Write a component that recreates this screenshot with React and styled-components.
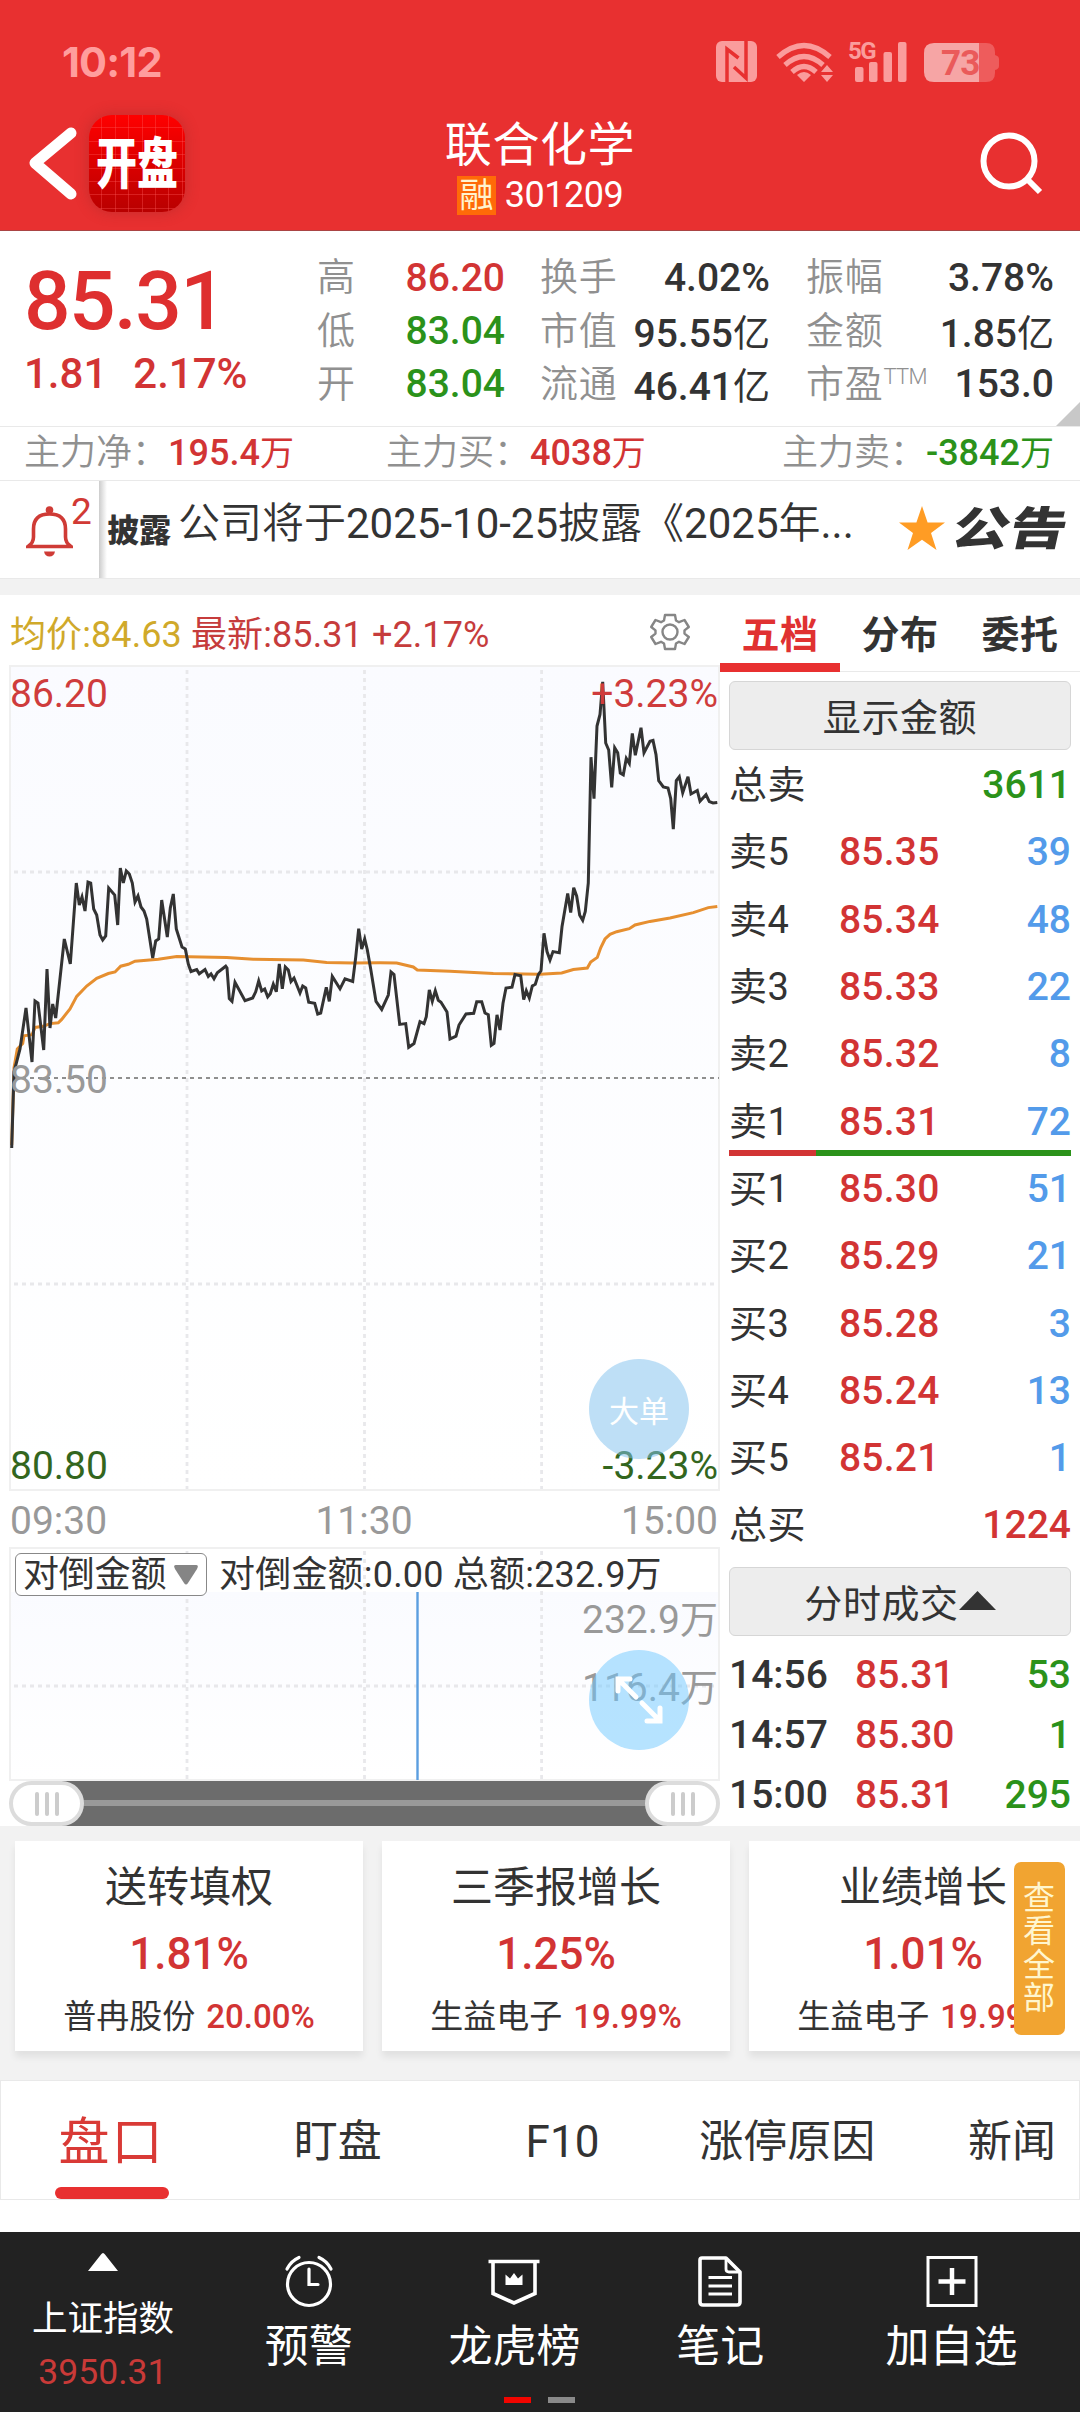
import React from 'react';
import styled, { createGlobalStyle } from 'styled-components';

const colors = {
  header: '#e83030',
  red: '#d23434',
  green: '#2b921a',
  darkGreen: '#33661e',
  blue: '#539bea',
  text: '#333333',
  grey: '#909090',
  line: '#e9e9e9',
  page: '#f2f2f2',
};

const GlobalStyle = createGlobalStyle`
  * {
    box-sizing: border-box;
  }

  body {
    margin: 0;
    background: #ffffff;
    color: ${colors.text};
    font-family: Roboto, 'Noto Sans CJK SC', sans-serif;
    font-weight: 400;
  }
`;

const stats = [
  [
    { label: '高', value: '86.20', color: colors.red },
    { label: '低', value: '83.04', color: colors.green },
    { label: '开', value: '83.04', color: colors.green },
  ],
  [
    { label: '换手', value: '4.02%' },
    { label: '市值', value: '95.55', unit: '亿' },
    { label: '流通', value: '46.41', unit: '亿' },
  ],
  [
    { label: '振幅', value: '3.78%' },
    { label: '金额', value: '1.85', unit: '亿' },
    { label: '市盈', sup: 'TTM', value: '153.0' },
  ],
];

const flows = [
  { label: '主力净：', value: '195.4', color: colors.red },
  { label: '主力买：', value: '4038', color: colors.red },
  { label: '主力卖：', value: '-3842', color: colors.green },
];

const sells = [
  { name: '卖5', price: '85.35', amount: '39' },
  { name: '卖4', price: '85.34', amount: '48' },
  { name: '卖3', price: '85.33', amount: '22' },
  { name: '卖2', price: '85.32', amount: '8' },
  { name: '卖1', price: '85.31', amount: '72' },
];

const buys = [
  { name: '买1', price: '85.30', amount: '51' },
  { name: '买2', price: '85.29', amount: '21' },
  { name: '买3', price: '85.28', amount: '3' },
  { name: '买4', price: '85.24', amount: '13' },
  { name: '买5', price: '85.21', amount: '1' },
];

const trades = [
  { time: '14:56', price: '85.31', amount: '53' },
  { time: '14:57', price: '85.30', amount: '1' },
  { time: '15:00', price: '85.31', amount: '295' },
];

const themes = [
  { title: '送转填权', change: '1.81%', stock: '普冉股份', stockChange: '20.00%' },
  { title: '三季报增长', change: '1.25%', stock: '生益电子', stockChange: '19.99%' },
  { title: '业绩增长', change: '1.01%', stock: '生益电子', stockChange: '19.99%' },
];

const priceLine = `11.7,1148 14,1072 20,1049 26,1008 32,1062 35,1001 38,1003 43.7,1050 47,969 50,1028 52.7,1004
  55.7,1018 64.3,939 70.3,964 76.3,883 79.3,905 82,897 85,911 88,882 90.7,883 93.7,909 96.7,915 100,935
  102.7,940 105.7,936 108.7,888 114.7,895 117.7,925 120.3,868 123.3,883 126.3,871 129.3,874 132.3,883
  135,902 138,896 141,907 144,911 146.7,919 152.7,958 155.7,941 158.7,939 161.7,900 167.3,937 170.3,908
  173.3,894 176.3,929 182,947 185.3,949 188.3,964 191,971.5 196.7,969.6 199.3,973.8 205,969.6 208.3,976.5
  211,973.8 214,978.8 217.3,972.7 225.7,966.2 227,968 229.3,998.7 232,1001.4 235,982.3 245,1000.6 252.7,998
  255.7,991.8 258.7,981 261.7,991 264.7,989 267.7,996.8 270.3,993.7 273.3,984.2 276.3,991.8 279.3,964
  282.3,988.8 285.3,967 288.3,970 291,981.5 294,978 300,993 302.7,986 305.7,988 308.7,1002.2 314.7,1003.3
  317.7,1014 320.7,1013 326.3,987.2 329.3,1001.4 332.3,976.5 340,988.8 345,978.8 352.7,981.5 355.7,957.4
  358.7,928.7 361.7,949 364.7,939 367.3,949.7 370.7,969 376,1001.4 381.7,1009.4 388.3,995 391,972 394,974.6
  399.7,1024.4 405.7,1023.6 408.7,1047.3 414,1043.5 420,1021.7 424,1023.6 426.3,1016.7 429.3,990
  432.3,1001.4 435.3,990.7 438.3,1000.3 441,1002.2 447,1012 450,1039 456,1036.2 459,1025 466,1014
  473.7,1013.3 476.7,1001.8 481.7,1001.8 485,1013 488.3,1014.8 491.3,1045.4 494,1043.5 497,1014.8 500,1030
  503,1003.3 506,988 512,987.2 515,974.6 520.7,975.8 523.7,999.5 526.3,990.7 529.3,998 532.3,986 535.3,984.2
  538.3,974.6 541,970.8 544,933.3 547,951.6 550,960 553,951.6 559.3,952.8 562,926.8 567.7,893.5 570.7,912.6
  573.7,887.7 576.7,896.2 579.7,915.3 582.7,920.3 585.3,911.5 588.3,882.8 591,757.2 594,798.6 597,726
  600,714.4 602.7,681.8 605.7,743 608.7,750 611.7,787.5 614.7,747.7 617.7,752.7 620.3,773 623.3,774.8
  626.3,758.4 629.3,763.4 632.3,733.5 635.3,755.3 641,727.8 644,752.7 650,741.2 653,740.4 656,754.6
  658.7,780.6 663.3,787 668,788 670.7,798.6 673.3,829.2 676.3,780.6 679.3,776.8 682.7,792.8 688,776.8
  691,794 697.3,790.5 700,801.2 706,794.7 709.3,801.6 713,803 717.3,802.4`;

const averageLine = `11.7,1145 14,1068 17.3,1049 22.7,1043.5 24,1035.8 32,1034.7 35,1027.4 43.3,1026.3 50,1023.6
  58.3,1022.8 61.7,1019.4 70,1009 76.7,996.4 86.7,986 96.7,978.4 108.3,973.5 115,972 120.7,966.2 128.3,964.3
  135,961.2 158.3,959.3 176.7,956.6 226.7,957.4 253.3,959.3 303.3,960 326.7,962.4 353.3,963 380,962.8
  396.7,963 413.3,967 417.3,970 450,971.2 493.3,973.5 540,974.2 561.7,973 573.3,969.6 587.3,968 590.7,962
  597.3,957.4 600.7,947.8 605,939 610,934.4 616.7,931.7 629.3,928.7 635,925 650,921.4 670,918 693.3,912.6
  708.3,907.6 717.3,906.5`;

const Page = styled.div`
  width: 1080px;
  height: 2412px;
  display: flex;
  flex-direction: column;
  overflow: hidden;
  background: #ffffff;
`;

const Header = styled.header`
  height: 231px;
  flex: none;
  background: ${colors.header};
  border-bottom: 1px solid #a44;
`;

const StatusBar = styled.div`
  height: 104px;
  padding: 20px 81px 0 62px;
  display: flex;
  align-items: center;
  justify-content: space-between;
`;

const Clock = styled.span`
  font-family: Inter, Roboto, sans-serif;
  font-weight: 700;
  font-size: 41.5px;
  letter-spacing: -0.8px;
  color: #ff9d9d;
`;

const TitleBar = styled.div`
  height: 126px;
  display: grid;
  grid-template-columns: 300px 1fr 300px;
`;

const HeaderLeft = styled.div`
  display: flex;
  padding: 11px 0 0 28px;
`;

const AppLogo = styled.div`
  width: 96px;
  height: 97px;
  margin-left: 12px;
  border-radius: 23px;
  display: flex;
  align-items: center;
  justify-content: center;
  background: repeating-linear-gradient(90deg, transparent 0 12.4px, rgba(255, 90, 90, 0.35) 12.4px 13.4px),
    repeating-linear-gradient(180deg, transparent 0 12.4px, rgba(255, 90, 90, 0.35) 12.4px 13.4px),
    linear-gradient(#ff0000, #b80000);
  box-shadow: 0 0 14px rgba(150, 40, 40, 0.45);

  & span {
    font-size: 41px;
    line-height: 52px;
    font-weight: 900;
    color: #ffffff;
    transform: scaleY(1.33);
  }
`;

const HeaderTitle = styled.div`
  display: flex;
  flex-direction: column;
  align-items: center;
  padding-top: 12px;
  color: #ffffff;

  & h1 {
    margin: 0;
    height: 57px;
    line-height: 58px;
    font-size: 47px;
    font-weight: 400;
    letter-spacing: 0.6px;
  }
`;

const Code = styled.div`
  display: flex;
  align-items: center;
  height: 44px;
  gap: 9px;
  font-size: 36px;
  letter-spacing: -0.5px;

  & b {
    width: 39px;
    height: 39px;
    line-height: 38px;
    font-size: 34px;
    font-weight: 400;
    text-align: center;
    background: #ff6a08;
    color: #fff3cf;
  }
`;

const HeaderRight = styled.div`
  display: flex;
  justify-content: flex-end;
  padding: 28px 37px 0 0;
`;

const Num = styled.span`
  font-family: Roboto, sans-serif;
  font-weight: 500;
  font-size: ${({ size }) => size || 39}px;
  letter-spacing: ${({ spacing }) => spacing || 0}px;
  color: ${({ color }) => color || colors.text};
`;

const Quote = styled.section`
  position: relative;
  height: 196px;
  flex: none;
  display: flex;
  border-bottom: 1px solid ${colors.line};
`;

const Price = styled.div`
  width: 317px;
  padding: 24px 0 0 24px;
  display: flex;
  flex-direction: column;
  color: ${colors.red};
`;

const PriceRow = styled.div`
  display: flex;
  gap: 26px;
  height: ${({ height }) => height}px;
  line-height: ${({ height }) => height}px;
`;

const StatColumn = styled.div`
  width: ${({ width }) => width}px;
  margin-right: ${({ gap }) => gap}px;
  padding-top: 20px;
`;

const Stat = styled.div`
  height: 53.4px;
  display: flex;
  align-items: center;
  justify-content: space-between;

  & label {
    display: flex;
    font-size: 38px;
    font-weight: 350;
    letter-spacing: 0.8px;
    line-height: 53px;
    color: ${colors.grey};
  }

  & sup {
    font-size: 22px;
    line-height: 37px;
    letter-spacing: -0.8px;
    vertical-align: top;
  }
`;

const Unit = styled.span`
  font-size: ${({ size }) => size || 37}px;
  font-weight: 400;
  color: ${({ color }) => color || colors.text};
`;

const Corner = styled.i`
  position: absolute;
  right: 0;
  bottom: 0;
  border-style: solid;
  border-width: 0 0 24px 24px;
  border-color: transparent transparent #c8c8c8 transparent;
`;

const Flows = styled.section`
  height: 54px;
  flex: none;
  padding: 0 26px 2px 24px;
  display: grid;
  grid-template-columns: 362px 1fr auto;
  align-items: center;
  border-bottom: 1px solid ${colors.line};
`;

const Flow = styled.div`
  display: flex;
  align-items: center;
  font-size: 36px;
  font-weight: 350;
  line-height: 48px;
  color: ${colors.grey};
`;

const Notice = styled.section`
  height: 98px;
  flex: none;
  display: flex;
  border-bottom: 1px solid ${colors.line};
`;

const Alarm = styled.div`
  width: 99px;
  display: flex;
  padding: 24px 0 0 26px;

  & span {
    margin: -15px 0 0 -2px;
    font-size: 37px;
    color: #d13a35;
  }
`;

const NoticeShade = styled.div`
  width: 8px;
  background: linear-gradient(90deg, #cccccc, #ffffff);
`;

const NoticeTag = styled.span`
  font-size: 32px;
  font-weight: 800;
  line-height: 101px;
  width: 71px;
`;

const NoticeText = styled.span`
  width: 703px;
  font-size: 42px;
  font-weight: 350;
  line-height: 86px;
  white-space: nowrap;

  & i {
    font-style: normal;
    font-weight: 400;
    font-size: 42px;
  }
`;

const NoticeLink = styled.div`
  display: flex;
  align-items: flex-start;
  padding: 24px 0 0 17px;

  & span {
    margin-left: 7px;
    font-size: 57px;
    line-height: 50px;
    font-weight: 900;
    transform: scaleY(0.8) skewX(-10deg);
  }
`;

const Gap = styled.div`
  height: ${({ height }) => height}px;
  flex: none;
  background: ${({ white }) => (white ? '#ffffff' : colors.page)};
`;

const Market = styled.section`
  height: 1231px;
  flex: none;
  display: flex;
`;

const ChartPanel = styled.div`
  width: 720px;
  position: relative;
`;

const ChartHead = styled.div`
  height: 71px;
  padding: 0 30px 0 10px;
  display: flex;
  align-items: center;
  font-size: 36px;
  letter-spacing: 0.1px;
  white-space: pre;

  & svg {
    margin-left: auto;
    margin-top: 2px;
  }
`;

const Label = styled.span`
  color: ${({ color }) => color};
  margin-right: 9px;
`;

const Chart = styled.svg`
  display: block;
  overflow: visible;

  & text {
    font-family: Roboto, 'Noto Sans CJK SC', sans-serif;
    font-size: 39px;
  }
`;

const TimeAxis = styled.div`
  height: 56px;
  padding: 3px 2px 0 10px;
  display: flex;
  align-items: center;
  justify-content: space-between;
  font-size: 39px;
  color: #999999;
`;

const SubChart = styled.div`
  position: relative;
  height: 234px;
`;

const SubHead = styled.div`
  position: absolute;
  top: 6px;
  left: 15px;
  display: flex;
  align-items: center;
  font-size: 36px;
  letter-spacing: 0.2px;
  line-height: 42px;
  white-space: pre;
`;

const Dropdown = styled.div`
  width: 192px;
  height: 43px;
  margin-right: 12px;
  padding: 0 8px 0 7px;
  display: flex;
  align-items: center;
  justify-content: space-between;
  border: 1.5px solid #888888;
  border-radius: 6px;
  background: #ffffff;
  letter-spacing: -0.2px;
`;

const Bubble = styled.div`
  position: absolute;
  left: 589px;
  top: ${({ top }) => top}px;
  width: 100px;
  height: 100px;
  border-radius: 50%;
  display: flex;
  align-items: center;
  justify-content: center;
  background: ${({ bg }) => bg};
  color: #ffffff;
  font-size: 30px;
`;

const Range = styled.div`
  height: 45px;
  margin-left: 9px;
  display: flex;
  align-items: center;
  justify-content: space-between;
  background: linear-gradient(#6c6c6c 0 19px, #999999 19px 25px, #6c6c6c 25px) 38px 0 / 635px 45px no-repeat;
`;

const Thumb = styled.div`
  width: 75px;
  height: 45px;
  border: 4px solid #dcdcdc;
  border-radius: 23px;
  background: #ffffff;
  display: flex;
  align-items: center;
  justify-content: center;
  gap: 6px;

  & i {
    width: 4px;
    height: 24px;
    border-radius: 2px;
    background: #cccccc;
  }
`;

const Book = styled.div`
  width: 360px;
`;

const BookTabs = styled.div`
  height: 77px;
  display: flex;
`;

const BookTab = styled.div`
  flex: 1;
  padding: 4px 0 0;
  text-align: center;
  font-size: 38px;
  font-weight: 700;
  line-height: 73px;
  letter-spacing: 0.6px;
  color: ${({ active }) => (active ? '#e03131' : colors.text)};
  box-shadow: inset 0 ${({ active }) => (active ? `-9px ${colors.header}` : `-1px ${colors.line}`)};
`;

const BookBody = styled.div`
  padding: 9px 9px 0;
`;

const BookButton = styled.button`
  width: 342px;
  height: 69px;
  padding: 0 0 2px;
  display: flex;
  align-items: center;
  justify-content: center;
  border: 1px solid #d6d6d6;
  border-radius: 6px;
  background: #ededed;
  color: ${colors.text};
  font-family: inherit;
  font-size: 38px;
  letter-spacing: 0.6px;
`;

const BookRow = styled.div`
  height: 67.3px;
  padding-top: 3px;
  display: grid;
  grid-template-columns: 110px 110px 1fr;
  align-items: center;
  font-size: 38px;
  letter-spacing: 0.5px;
  line-height: 60px;

  & > :last-child {
    text-align: right;
    grid-column: 3;
  }
`;

const Ratio = styled.div`
  height: 6px;
  margin: -4px 0 -2px;
  display: flex;
  background: ${colors.green};

  &::before {
    content: '';
    width: 87px;
    background: ${colors.red};
  }
`;

const TradeRow = styled(BookRow)`
  height: 60px;
  grid-template-columns: 126px 110px 1fr;
`;

const Themes = styled.section`
  position: relative;
  height: 254px;
  flex: none;
  padding: 15px 0 0 15px;
  display: flex;
  gap: 19px;
  background: ${colors.page};
`;

const ThemeCard = styled.div`
  width: 348px;
  height: 210px;
  flex: none;
  display: flex;
  flex-direction: column;
  align-items: center;
  background: #ffffff;
  box-shadow: 0 6px 7px rgba(0, 0, 0, 0.07);

  & h2 {
    margin: 15px 0 0;
    font-size: 42px;
    font-weight: 400;
    line-height: 64px;
  }
`;

const ThemeChange = styled(Num)`
  margin-top: 1px;
  line-height: 66px;
`;

const ThemeStock = styled.div`
  display: flex;
  align-items: center;
  margin-top: 2px;
  gap: 11px;
  font-size: 33px;
  line-height: 56px;
  white-space: nowrap;
`;

const ViewAll = styled.div`
  position: absolute;
  left: 1014px;
  top: 36px;
  width: 51px;
  height: 173px;
  padding: 20px 9px 0;
  border-radius: 7px;
  background: #f1a431;
  color: #fff6cf;
  font-size: 32px;
  line-height: 33.3px;
  word-break: break-all;
`;

const Tabs = styled.nav`
  height: 120px;
  flex: none;
  display: flex;
  border: 1px solid ${colors.line};
  overflow: hidden;
`;

const Tab = styled.div`
  position: relative;
  width: 224.8px;
  flex: none;
  text-align: center;
  font-size: ${({ active }) => (active ? 51 : 44)}px;
  letter-spacing: ${({ active }) => (active ? 2 : 0)}px;
  text-indent: ${({ active }) => (active ? -4 : -1)}px;
  line-height: 123px;
  color: ${({ active }) => (active ? '#d93a36' : colors.text)};

  &::after {
    content: '';
    display: ${({ active }) => (active ? 'block' : 'none')};
    position: absolute;
    left: 54px;
    bottom: 0;
    width: 114px;
    height: 12px;
    border-radius: 6px;
    background: ${colors.header};
  }
`;

const BottomBar = styled.footer`
  position: relative;
  height: 180px;
  flex: none;
  display: grid;
  grid-template-columns: repeat(4, 205.8px) 1fr;
  background: #222222;
  color: #ffffff;
`;

const BottomItem = styled.div`
  padding-top: 23px;
  display: flex;
  flex-direction: column;
  align-items: center;
  font-size: 44px;

  & svg {
    width: 54px;
    height: 54px;
    flex: none;
  }

  & span {
    margin-top: 8px;
    line-height: 60px;
  }
`;

const IndexItem = styled(BottomItem)`
  padding-top: 21px;
  font-size: 35.5px;

  & svg {
    width: 30px;
    height: 18px;
  }

  & span {
    margin-top: 20px;
    line-height: 56px;
  }

  & em {
    font-style: normal;
    line-height: 51px;
    color: #c93a38;
  }
`;

const Dots = styled.div`
  position: absolute;
  left: 504px;
  top: 165px;
  display: flex;
  gap: 17px;

  & i {
    width: 27px;
    height: 6px;
    background: #8a8a8a;
  }

  & i:first-child {
    background: #f20500;
  }
`;

const StatusIcons = () => (
  <svg width="284" height="48" viewBox="715 38 284 48" fill="#fa9c9c">
    <rect x="716" y="41" width="41" height="41" rx="6" />
    <path d="M727 82V49L738.5 58M746 41V78L734 67" fill="none" stroke={colors.header} strokeWidth="3.5" />
    <g fill="none" stroke="#fa9c9c" strokeWidth="5.2">
      <path d="M778 57Q804 34 830 57" />
      <path d="M785 65Q804 48 823 65" />
      <path d="M792 72Q804 61 816 72" />
    </g>
    <path d="M797 75Q804 69 811 75L804 82ZM827 65L833 72H821ZM827 82L833 75H821Z" />
    <text x="848" y="59" fontFamily="Roboto" fontWeight="700" fontSize="24" letterSpacing="-1.5">
      5G
    </text>
    <rect x="855" y="67" width="8.5" height="15" rx="2" />
    <rect x="869" y="62" width="8.5" height="20" rx="2" />
    <rect x="883.5" y="52" width="8.5" height="30" rx="2" />
    <rect x="898" y="42" width="8.5" height="40" rx="2" />
    <path d="M979 43H986Q995 43 995 52V55Q999 56 999 59V66Q999 69 995 70V73Q995 82 986 82H979Z" fill="#ee5c5c" />
    <path d="M979 43V82H934Q924 82 924 72V53Q924 43 934 43Z" fill="#f6a5a5" />
    <text x="941" y="75" fill="#ea5a5a" fontFamily="Roboto" fontWeight="700" fontSize="35" letterSpacing="-0.8">
      73
    </text>
  </svg>
);

const Gear = () => (
  <svg width="40" height="40" viewBox="0 0 40 40" fill="none" stroke="#868686" strokeWidth="2.4">
    <path d="M15 3H25L26 8.5L29 10.2L34.5 8L38.8 15L34.5 18.4V21.6L38.8 25L34.5 32L29 29.8L26 31.5L25 37H15L14 31.5L11 29.8L5.5 32L1.2 25L5.5 21.6V18.4L1.2 15L5.5 8L11 10.2L14 8.5Z" strokeLinejoin="round" />
    <circle cx="20" cy="20" r="7.5" />
  </svg>
);

const PriceChart = () => (
  <Chart width="720" height="825" viewBox="0 666 720 825">
    <defs>
      <linearGradient id="chartBg" x1="0" y1="0" x2="0" y2="1">
        <stop offset="0" stopColor="#fafbff" />
        <stop offset="1" stopColor="#ffffff" />
      </linearGradient>
    </defs>
    <rect x="10" y="666" width="709" height="824" fill="url(#chartBg)" stroke="#f0f0f0" strokeWidth="2" />
    <g stroke="#e8e8eb" strokeWidth="2.8" strokeDasharray="4 4">
      <path d="M187 670V1489M364.5 670V1489M541.6 670V1489M14 872H718M14 1284H718" />
    </g>
    <path d="M14 1078H719" stroke="#8f8f8f" strokeWidth="1.8" strokeDasharray="4 4" />
    <polyline points={averageLine} fill="none" stroke="#e68f30" strokeWidth="3" />
    <polyline points={priceLine} fill="none" stroke="#333333" strokeWidth="3" />
    <text x="10" y="707" fill="#cf3c3c">
      86.20
    </text>
    <text x="718" y="707" fill="#cf3c3c" textAnchor="end">
      +3.23%
    </text>
    <text x="10" y="1092.5" fill="#999999">
      83.50
    </text>
    <text x="10" y="1479" fill={colors.darkGreen}>
      80.80
    </text>
    <text x="718" y="1479" fill={colors.darkGreen} textAnchor="end">
      -3.23%
    </text>
  </Chart>
);

const AmountChart = () => (
  <Chart width="720" height="234" viewBox="0 1547 720 234">
    <rect x="10" y="1548" width="709" height="232" fill="#ffffff" stroke="#f0f0f0" strokeWidth="2" />
    <rect x="11" y="1592" width="707" height="187" fill="url(#chartBg)" />
    <g stroke="#e8e8eb" strokeWidth="2.8" strokeDasharray="4 4">
      <path d="M187 1551V1780M364.5 1551V1780M541.6 1551V1780M14 1686H718" />
    </g>
    <path d="M417.5 1592V1780" stroke="#5b9ee0" strokeWidth="2.4" />
    <g fill="#999999" textAnchor="end">
      <text x="718" y="1633">
        232.9<tspan fontSize="38">万</tspan>
      </text>
      <text x="718" y="1701">
        116.4<tspan fontSize="38">万</tspan>
      </text>
    </g>
  </Chart>
);

const Level = ({ name, price, amount }) => (
  <BookRow>
    <span>{name}</span>
    <Num color={colors.red} spacing={0.2}>
      {price}
    </Num>
    <Num color={colors.blue}>{amount}</Num>
  </BookRow>
);

const App = () => (
  <>
    <GlobalStyle />
    <Page>
      <Header>
        <StatusBar>
          <Clock>10:12</Clock>
          <StatusIcons />
        </StatusBar>
        <TitleBar>
          <HeaderLeft>
            <svg width="49" height="98" viewBox="0 0 49 98">
              <path d="M43 18L7 48L43 79" fill="none" stroke="#ffffff" strokeWidth="11" strokeLinecap="round" strokeLinejoin="round" />
            </svg>
            <AppLogo>
              <span>开盘</span>
            </AppLogo>
          </HeaderLeft>
          <HeaderTitle>
            <h1>联合化学</h1>
            <Code>
              <b>融</b>
              301209
            </Code>
          </HeaderTitle>
          <HeaderRight>
            <svg width="64" height="70" viewBox="0 0 64 70" fill="none" stroke="#ffffff" strokeWidth="6">
              <circle cx="30" cy="29" r="25.5" />
              <path d="M48 47L61 60" />
            </svg>
          </HeaderRight>
        </TitleBar>
      </Header>

      <Quote>
        <Price>
          <PriceRow height={92}>
            <Num size={82} spacing={-1.6} color="#de2f2f">
              85.31
            </Num>
          </PriceRow>
          <PriceRow height={54}>
            <Num size={42} color={colors.red}>
              1.81
            </Num>
            <Num size={42} color={colors.red}>
              2.17%
            </Num>
          </PriceRow>
        </Price>
        {stats.map((column, index) => (
          <StatColumn key={column[0].label} width={[188, 230, 248][index]} gap={[35, 36, 0][index]}>
            {column.map(({ label, sup, value, unit, color }) => (
              <Stat key={label}>
                <label>
                  {label}
                  {sup && <sup>{sup}</sup>}
                </label>
                <span>
                  <Num color={color}>{value}</Num>
                  {unit && <Unit>{unit}</Unit>}
                </span>
              </Stat>
            ))}
          </StatColumn>
        ))}
        <Corner />
      </Quote>

      <Flows>
        {flows.map(({ label, value, color }) => (
          <Flow key={label}>
            {label}
            <Num size={36} color={color}>
              {value}
            </Num>
            <Unit size={34} color={color}>
              万
            </Unit>
          </Flow>
        ))}
      </Flows>

      <Notice>
        <Alarm>
          <svg width="47" height="54" viewBox="0 0 47 54" fill="none" stroke="#cf3b36" strokeWidth="3.6">
            <path d="M2 41.5Q7.5 38 7.5 32V24Q7.5 9 23.5 9Q39.5 9 39.5 24V32Q39.5 38 45 41.5Z" />
            <circle cx="23.5" cy="5" r="3.8" fill="#cf3b36" stroke="none" />
            <path d="M18 46.5H29Q28 51.5 23.5 51.5Q19 51.5 18 46.5Z" fill="#cf3b36" stroke="none" />
          </svg>
          <span>2</span>
        </Alarm>
        <NoticeShade />
        <NoticeTag>披露</NoticeTag>
        <NoticeText>
          公司将于<i>2025-10-25</i>披露《<i>2025</i>年<i>...</i>
        </NoticeText>
        <NoticeLink>
          <svg width="48" height="48" viewBox="0 0 48 48">
            <path d="M24 1L29.6 17.5H47L33 28L38.5 45L24 34.7L9.5 45L15 28L1 17.5H18.4Z" fill="#ff9c24" />
          </svg>
          <span>公告</span>
        </NoticeLink>
      </Notice>
      <Gap height={16} />

      <Market>
        <ChartPanel>
          <ChartHead>
            <Label color="#d0a92a">均价:84.63</Label>
            <Label color="#c63c3c">最新:85.31 +2.17%</Label>
            <Gear />
          </ChartHead>
          <PriceChart />
          <TimeAxis>
            <span>09:30</span>
            <span>11:30</span>
            <span>15:00</span>
          </TimeAxis>
          <SubChart>
            <AmountChart />
            <SubHead>
              <Dropdown>
                对倒金额
                <svg width="24" height="20" viewBox="0 0 24 20">
                  <path d="M2 0H22Q25 0 23 4L14 18Q12 21 10 18L1 4Q-1 0 2 0Z" fill="#858585" />
                </svg>
              </Dropdown>
              对倒金额:0.00 总额:232.9万
            </SubHead>
          </SubChart>
          <Range>
            <Thumb>
              <i />
              <i />
              <i />
            </Thumb>
            <Thumb>
              <i />
              <i />
              <i />
            </Thumb>
          </Range>
          <Bubble top={764} bg="rgba(130, 193, 238, 0.52)">
            大单
          </Bubble>
          <Bubble top={1055} bg="rgba(110, 199, 255, 0.5)">
            <svg width="50" height="50" viewBox="0 0 50 50" fill="none" stroke="#ffffff" strokeWidth="5" strokeLinecap="round">
              <path d="M4 16V4H16M4 4L22 22M28 28L45 45M33 46H46V33" />
            </svg>
          </Bubble>
        </ChartPanel>

        <Book>
          <BookTabs>
            <BookTab active>五档</BookTab>
            <BookTab>分布</BookTab>
            <BookTab>委托</BookTab>
          </BookTabs>
          <BookBody>
            <BookButton>显示金额</BookButton>
            <BookRow>
              <span>总卖</span>
              <Num color={colors.green}>3611</Num>
            </BookRow>
            {sells.map(item => (
              <Level key={item.name} {...item} />
            ))}
            <Ratio />
            {buys.map(item => (
              <Level key={item.name} {...item} />
            ))}
            <BookRow>
              <span>总买</span>
              <Num color={colors.red}>1224</Num>
            </BookRow>
            <Gap height={9} white />
            <BookButton>
              分时成交
              <svg width="37" height="19" viewBox="0 0 37 19">
                <path d="M0 19L18.5 0L37 19Z" fill="#333333" />
              </svg>
            </BookButton>
            <Gap height={6} white />
            {trades.map(({ time, price, amount }) => (
              <TradeRow key={time}>
                <Num>{time}</Num>
                <Num color={colors.red}>{price}</Num>
                <Num color={colors.green}>{amount}</Num>
              </TradeRow>
            ))}
          </BookBody>
        </Book>
      </Market>

      <Themes>
        {themes.map(({ title, change, stock, stockChange }) => (
          <ThemeCard key={title}>
            <h2>{title}</h2>
            <ThemeChange size={44} color={colors.red}>
              {change}
            </ThemeChange>
            <ThemeStock>
              {stock}
              <Num size={33} color={colors.red}>
                {stockChange}
              </Num>
            </ThemeStock>
          </ThemeCard>
        ))}
        <ViewAll>查看全部</ViewAll>
      </Themes>

      <Tabs>
        <Tab active>盘口</Tab>
        <Tab>盯盘</Tab>
        <Tab>F10</Tab>
        <Tab>涨停原因</Tab>
        <Tab>新闻</Tab>
      </Tabs>
      <Gap height={32} white />

      <BottomBar>
        <IndexItem>
          <svg viewBox="0 0 30 18">
            <path d="M15 0Q16 0 17 1.5L30 18H0L13 1.5Q14 0 15 0Z" fill="#ffffff" />
          </svg>
          <span>上证指数</span>
          <em>3950.31</em>
        </IndexItem>
        <BottomItem>
          <svg viewBox="0 0 54 54" fill="none" stroke="#ffffff" strokeWidth="3.2" strokeLinecap="round">
            <circle cx="27" cy="29" r="21.5" />
            <path d="M27 14V29.5H36M5 14Q9 6 17 2.5M49 14Q45 6 37 2.5" />
          </svg>
          <span>预警</span>
        </BottomItem>
        <BottomItem>
          <svg viewBox="0 0 54 54" fill="none" stroke="#ffffff" strokeWidth="3.6">
            <path d="M1.5 6.5H52.5M6 6.5V38.5L27 48L48 38.5V6.5" />
            <path d="M18.5 19.5L23 23.5L27 18L31 23.5L35.5 19.5V30H18.5Z" fill="#ffffff" stroke="none" />
          </svg>
          <span>龙虎榜</span>
        </BottomItem>
        <BottomItem>
          <svg viewBox="0 0 54 54" fill="none" stroke="#ffffff" strokeWidth="3.6" strokeLinejoin="round">
            <path d="M9 3H33L47 17V47Q47 50 44 50H10Q7 50 7 47V5Q7 3 9 3Z" />
            <path d="M33 3V14Q33 17 36 17H47M15.5 22.5H39M15.5 31H39M15.5 39H39" strokeWidth="2.8" />
          </svg>
          <span>笔记</span>
        </BottomItem>
        <BottomItem>
          <svg viewBox="0 0 54 54" fill="none" stroke="#ffffff">
            <rect x="3" y="2.5" width="48" height="48" strokeWidth="3" />
            <path d="M27 13V40M13.5 26.5H40.5" strokeWidth="4.5" />
          </svg>
          <span>加自选</span>
        </BottomItem>
        <Dots>
          <i />
          <i />
        </Dots>
      </BottomBar>
    </Page>
  </>
);

export default App;
